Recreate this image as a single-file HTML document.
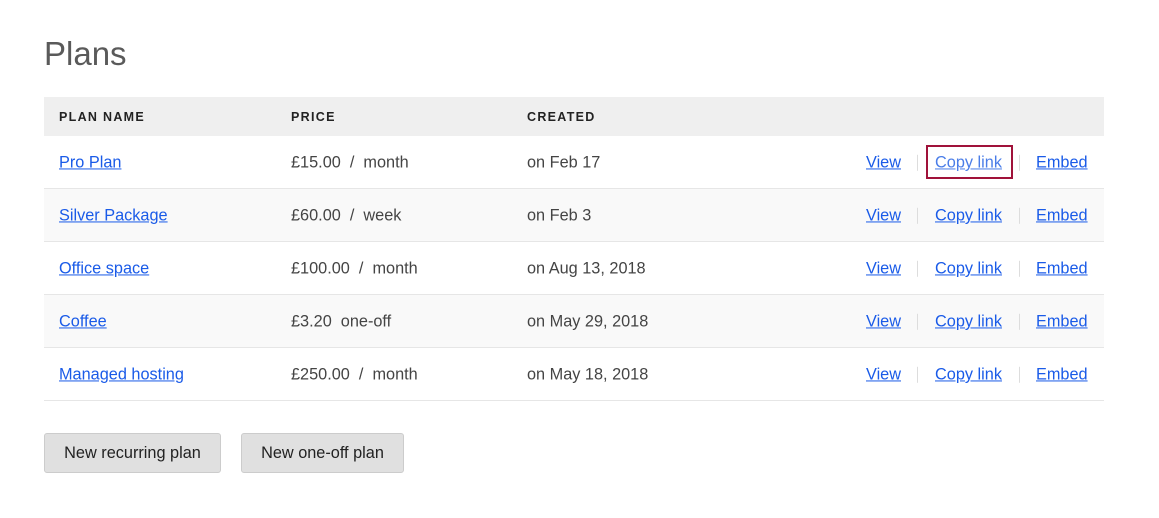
<!DOCTYPE html>
<html><head><style>
body{margin:0;background:#fff;font-family:"Liberation Sans",sans-serif;color:#444;width:1159px;height:518px;position:relative;overflow:hidden}
h1{position:absolute;left:44px;top:35px;margin:0;font-weight:normal;font-size:33px;color:#5a5a5a;letter-spacing:0}
.tbl{position:absolute;left:44px;top:97px;width:1060px}
.hd{height:39px;background:#efefef;position:relative;font-size:12.5px;font-weight:bold;letter-spacing:1.3px;color:#222}
.hd span{position:absolute;top:50%;transform:translateY(-50%);white-space:nowrap}
.row span{position:absolute;top:50%;transform:translateY(-45%);white-space:nowrap}
.row{height:52px;border-bottom:1px solid #e6e6e6;position:relative;font-size:16.3px}
.row:nth-child(odd){background:#f9f9f9}
a{color:#1a5be8;text-decoration:underline}
.sep{width:1px;height:16px;background:#ddd}
.box{position:absolute;left:882px;top:9px;width:83px;height:30px;border:2px solid #a0123a}
.btn{position:absolute;top:433px;height:38px;background:#e0e0e0;border:1px solid #ccc;border-radius:3px;font-size:16.3px;color:#222;line-height:39px;text-align:center}
</style></head><body>
<h1>Plans</h1>
<div class="tbl">
<div class="hd"><span style="left:15px">PLAN NAME</span><span style="left:247px">PRICE</span><span style="left:483px">CREATED</span></div>
<div class="row"><span style="left:15px"><a>Pro Plan</a></span><span style="left:247px">£15.00 &nbsp;/&nbsp; month</span><span style="left:483px">on Feb 17</span><span style="left:822px"><a>View</a></span><span class="sep" style="left:873px"></span><div class="box"></div><span style="left:891px"><a style="color:#4a7de8">Copy link</a></span><span class="sep" style="left:975px"></span><span style="left:992px"><a>Embed</a></span></div>
<div class="row"><span style="left:15px"><a>Silver Package</a></span><span style="left:247px">£60.00 &nbsp;/&nbsp; week</span><span style="left:483px">on Feb 3</span><span style="left:822px"><a>View</a></span><span class="sep" style="left:873px"></span><span style="left:891px"><a>Copy link</a></span><span class="sep" style="left:975px"></span><span style="left:992px"><a>Embed</a></span></div>
<div class="row"><span style="left:15px"><a>Office space</a></span><span style="left:247px">£100.00 &nbsp;/&nbsp; month</span><span style="left:483px">on Aug 13, 2018</span><span style="left:822px"><a>View</a></span><span class="sep" style="left:873px"></span><span style="left:891px"><a>Copy link</a></span><span class="sep" style="left:975px"></span><span style="left:992px"><a>Embed</a></span></div>
<div class="row"><span style="left:15px"><a>Coffee</a></span><span style="left:247px">£3.20 &nbsp;one-off</span><span style="left:483px">on May 29, 2018</span><span style="left:822px"><a>View</a></span><span class="sep" style="left:873px"></span><span style="left:891px"><a>Copy link</a></span><span class="sep" style="left:975px"></span><span style="left:992px"><a>Embed</a></span></div>
<div class="row"><span style="left:15px"><a>Managed hosting</a></span><span style="left:247px">£250.00 &nbsp;/&nbsp; month</span><span style="left:483px">on May 18, 2018</span><span style="left:822px"><a>View</a></span><span class="sep" style="left:873px"></span><span style="left:891px"><a>Copy link</a></span><span class="sep" style="left:975px"></span><span style="left:992px"><a>Embed</a></span></div>
</div>
<div class="btn" style="left:44px;width:175px">New recurring plan</div>
<div class="btn" style="left:241px;width:161px">New one-off plan</div>
</body></html>
